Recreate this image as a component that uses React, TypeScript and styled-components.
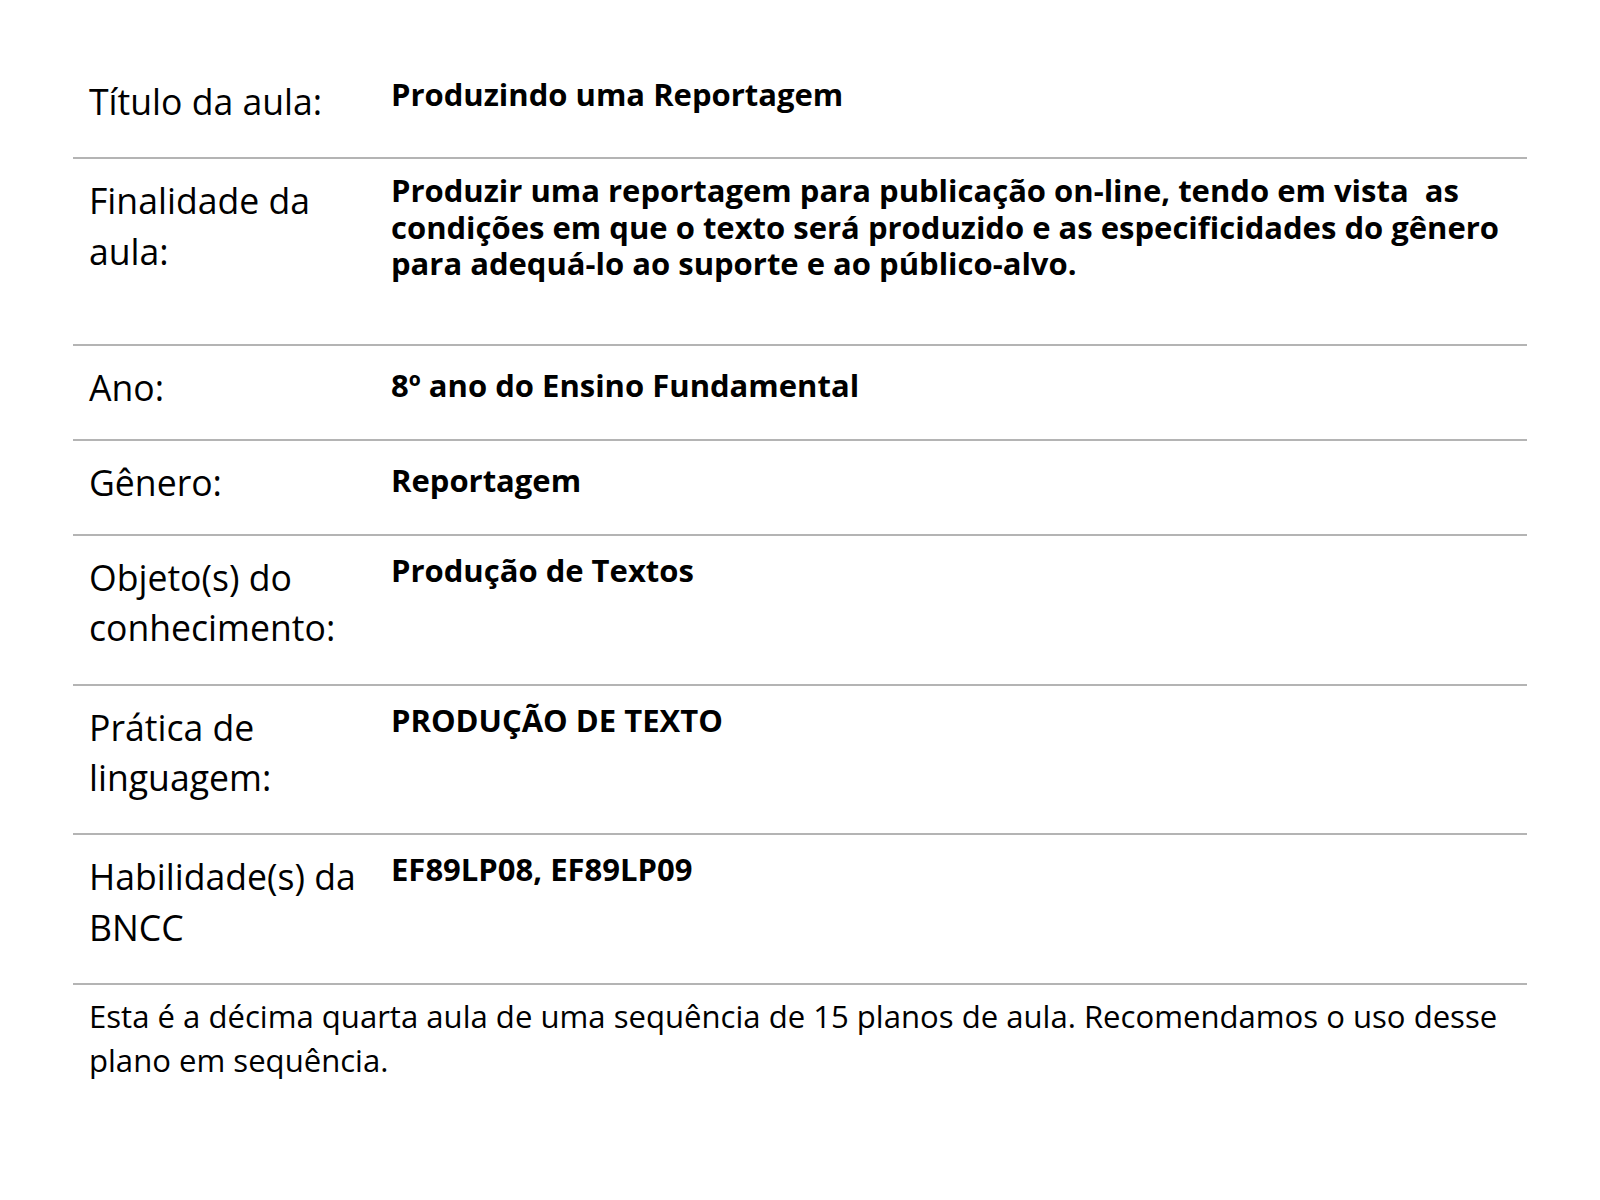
import React from "react";
import styled, { createGlobalStyle } from "styled-components";

const GlobalStyle = createGlobalStyle`
  body {
    margin: 0;
    background: #ffffff;
    font-family: "Open Sans", "Noto Sans", sans-serif;
    color: #000000;
  }
`;

const Page = styled.div`
  padding: 60px 73px;
`;

const Table = styled.div`
  display: grid;
  grid-template-columns: 302px 1fr;
`;

const Row = styled.div`
  display: contents;
`;

const Label = styled.div<{ $compact?: boolean }>`
  padding: 16px 10px ${(p) => (p.$compact ? "27px" : "31px")} 16px;
  font-size: 35.6px;
  line-height: 50.3px;
  font-weight: 400;
  border-bottom: 2px solid #b4b4b4;
`;

const Value = styled.div<{ $compact?: boolean; $tall?: boolean }>`
  padding: ${(p) => (p.$compact ? "21px" : p.$tall ? "13px" : "16px")} 16px
    ${(p) => (p.$tall ? "62px" : "16px")} 16px;
  font-size: 31px;
  line-height: 36.4px;
  font-weight: 700;
  border-bottom: 2px solid #b4b4b4;
`;

const Note = styled.p`
  margin: 0;
  padding: 9px 16px;
  font-size: 31.1px;
  line-height: 44px;
  font-weight: 400;
`;

const rows = [
  { label: "Título da aula:", value: "Produzindo uma Reportagem" },
  {
    label: "Finalidade da aula:",
    value:
      "Produzir uma reportagem para publicação on-line, tendo em vista\u00a0 as condições em que o texto será produzido e as especificidades do gênero para adequá-lo ao suporte e ao público-alvo.",
    tall: true,
  },
  { label: "Ano:", value: "8º ano do Ensino Fundamental", compact: true },
  { label: "Gênero:", value: "Reportagem", compact: true },
  { label: "Objeto(s) do conhecimento:", value: "Produção de Textos" },
  { label: "Prática de linguagem:", value: "PRODUÇÃO DE TEXTO" },
  { label: "Habilidade(s) da BNCC", value: "EF89LP08, EF89LP09" },
];

export default function App() {
  return (
    <Page>
      <GlobalStyle />
      <Table>
        {rows.map((r) => (
          <Row key={r.label}>
            <Label $compact={r.compact}>{r.label}</Label>
            <Value $compact={r.compact} $tall={r.tall}>
              {r.value}
            </Value>
          </Row>
        ))}
      </Table>
      <Note>
        Esta é a décima quarta aula de uma sequência de 15 planos de aula.
        Recomendamos o uso desse plano em sequência.
      </Note>
    </Page>
  );
}
